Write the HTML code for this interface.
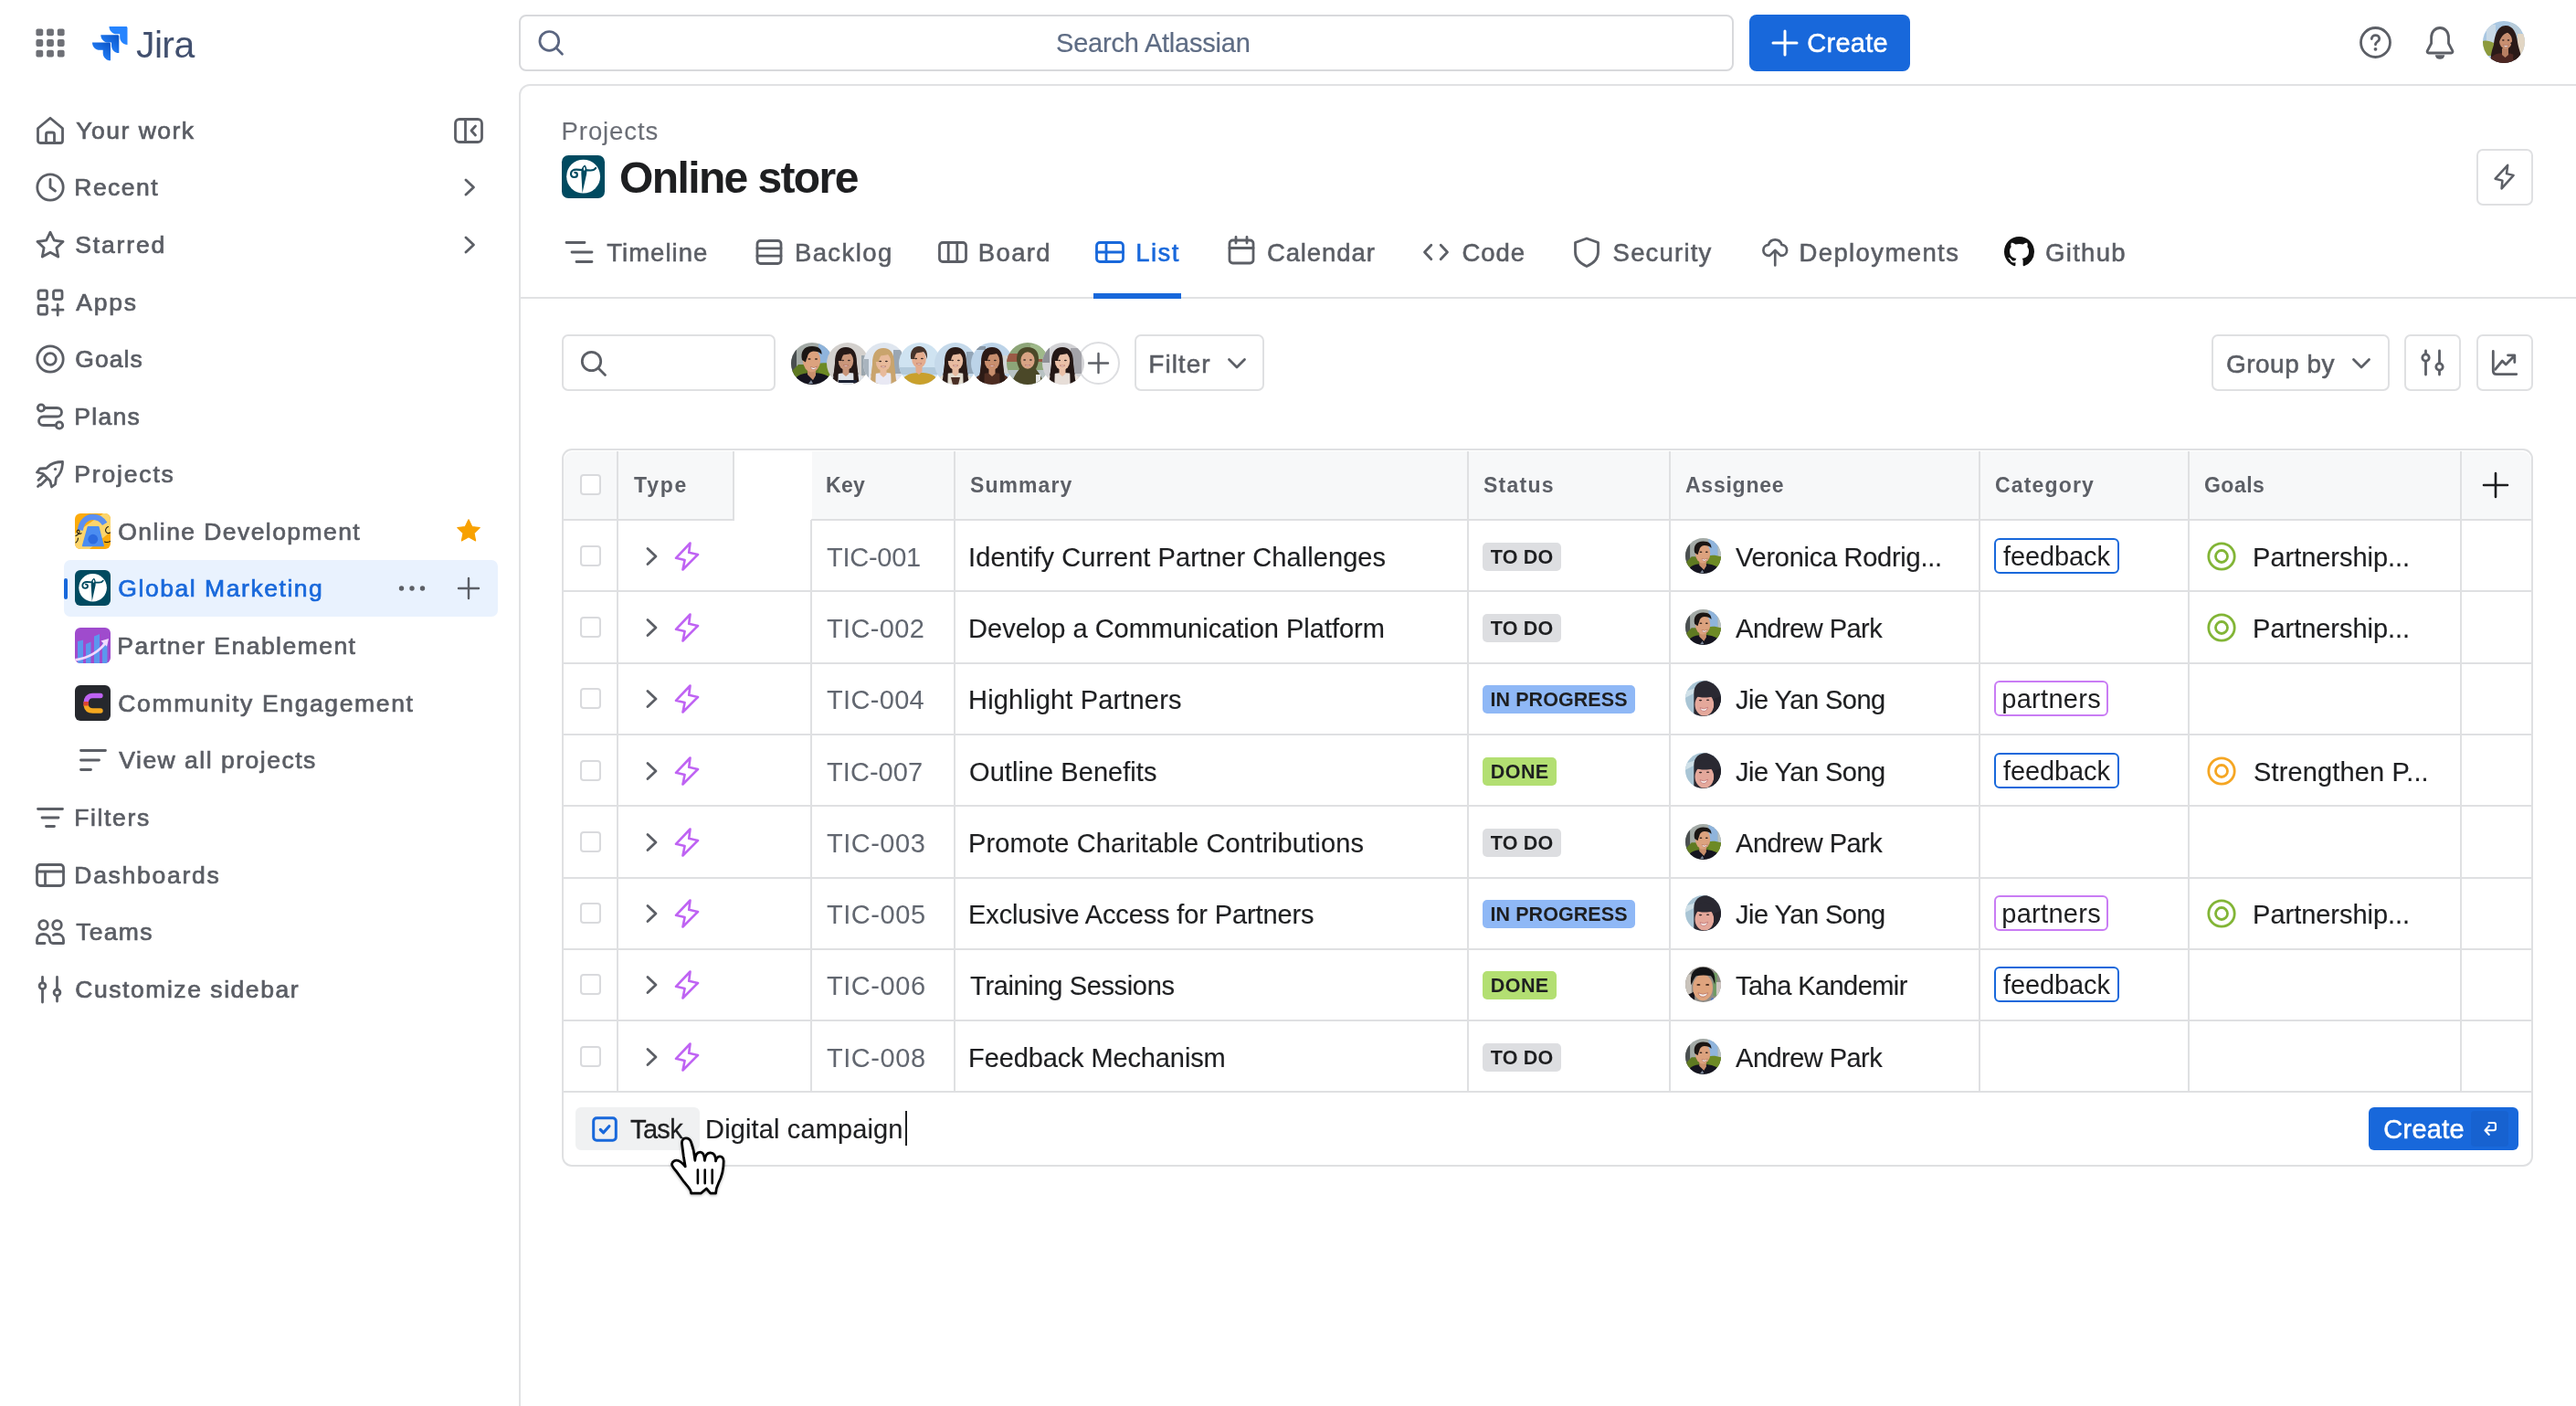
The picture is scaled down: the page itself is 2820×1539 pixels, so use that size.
<!DOCTYPE html>
<html lang="en"><head>
<meta charset="utf-8">
<title>Online store - List - Jira</title>
<style>
*{box-sizing:border-box;margin:0;padding:0}
html,body{width:2820px;height:1539px;overflow:hidden;background:#fff}
body{font-family:"Liberation Sans",sans-serif;color:#5a5d64;position:relative;font-size:29px;letter-spacing:0;-webkit-font-smoothing:antialiased}
.abs{position:absolute}
svg{display:block;overflow:visible}
.ic{position:absolute;fill:none;stroke:#5c5f66;stroke-width:2.8;stroke-linecap:round;stroke-linejoin:round}
.t{position:absolute;white-space:nowrap;line-height:32px;height:32px;-webkit-text-stroke:0.55px currentColor}
/* top bar */
#search{left:568px;top:16px;width:1330px;height:62px;border:2px solid #d8d9dc;border-radius:8px;background:#fff}
#createbtn{left:1915px;top:15.500px;width:176px;height:62.500px;border-radius:8px;background:#1868db}
/* main panel */
#panel{left:568px;top:92px;width:2300px;height:1500px;border:2px solid #e1e2e4;border-radius:12px 0 0 0;background:#fff}
#tabline{left:570px;top:325px;width:2250px;height:2px;background:#e1e2e4}
.nav .t{left:83px;font-size:26.500px;padding-top:0;-webkit-text-stroke:0.7px currentColor}
.sub .t{left:130px;font-size:26.500px;padding-top:0;-webkit-text-stroke:0.7px currentColor}
.btn{position:absolute;border:2px solid #dfe0e2;border-radius:7px;background:#fff}

.hl{height:2px;background:#dfe0e2}
.vl{width:2px;background:#dfe0e2}
.th{font-weight:700;font-size:23px;color:#5c5f66;-webkit-text-stroke:0}
.cb{width:23px;height:23px;border:2.500px solid #d9dadd;border-radius:4px;background:#fff}
.lz{height:31px;border-radius:5px;color:#1e1f21;font-weight:700;font-size:21.500px;line-height:33px;text-align:center;white-space:nowrap}
.tag{height:39px;border:2.500px solid;border-radius:6px;color:#1e1f21;font-size:29px;line-height:36px;text-align:center;white-space:nowrap;background:#fff}
.av40{width:39px;height:39px;border-radius:50%;overflow:hidden}
.av46{width:46px;height:46px;border-radius:50%;overflow:hidden}
.t{padding-top:1px}
</style>
</head>
<body>
<div id="root" style="position:absolute;left:0;top:0;width:2820px;height:1539px;will-change:transform">
<svg width="0" height="0" style="position:absolute"><defs>
<symbol id="av-andrew" viewBox="0 0 46 46"><rect width="46" height="46" fill="#a3aaa6"></rect><rect x="0" y="6" width="6" height="30" fill="#4a4f50"></rect><rect x="30" y="0" width="12" height="26" fill="#8fb4dc"></rect><rect x="42" y="0" width="4" height="26" fill="#b9c2c4"></rect><path d="M8 24h38v14H0v-6z" fill="#5f7a22"></path><path d="M30 23c4-1.500 10-1 16 1v12H30z" fill="#6d8a25"></path><path d="M2 46c1-8 7-13 21-13 11 0 19 3 23 9v4z" fill="#15141f"></path><path d="M18 30h9v6l-3 5-6-6z" fill="#c98f6c"></path><ellipse cx="22.500" cy="19.500" rx="9.600" ry="12.800" fill="#dca27e"></ellipse><path d="M12 19c-2-9 2-15 11-15 8 0 11 4 10.500 9-2-2.500-5-3.500-9-3.500-4 .5-6 3-6.500 6-.8 2-1.500 3.500-2 6z" fill="#1b1614"></path><ellipse cx="20" cy="18" rx="1.700" ry=".8" fill="#2a1c16"></ellipse><ellipse cx="27.500" cy="18" rx="1.700" ry=".8" fill="#2a1c16"></ellipse><path d="M21.500 26.500q3.500 2.500 7-.5-1 3.500-4 3.500t-3-3z" fill="#fff" stroke="#9c5146" stroke-width=".5"></path><path d="M22 41l2 4h-5z" fill="#7c8899"></path></symbol>
<symbol id="av-w2" viewBox="0 0 46 46"><rect width="46" height="46" fill="#d3d0cd"></rect><rect x="38" y="14" width="8" height="22" fill="#9aa5ad"></rect><path d="M9 22c0-12 4.500-17 12-17s12 5 12 17c0 8 2 15 4 22H5c2-7 4-14 4-22z" fill="#251917"></path><path d="M2 46c1-9 8-13 21-13s20 4 21 13z" fill="#e0e4e9"></path><path d="M17.5 26h7v8l-3.500 3-3.500-3z" fill="#c9967a"></path><path d="M9 24c-1 8-2 16-3 24h6.500c0-8 0-15 1-21zM33 24c1 8 2 16 3 24h-6.500c0-8 0-15-1-21z" fill="#251917"></path><ellipse cx="21" cy="20" rx="8.2" ry="10.2" fill="#c9967a"></ellipse><path d="M11.8 20c-1.500-9 3-14 9.2-14s10.7 5 9.2 14c-1-4.500-2.500-7-4-8-3 1-7 1.500-7.199999999999999 1-1.500 1-2.500 3.500-3 7z" fill="#251917"></path><ellipse cx="17.6" cy="19.5" rx="1.5" ry="0.8" fill="#3a2a25"></ellipse><ellipse cx="24.4" cy="19.5" rx="1.5" ry="0.8" fill="#3a2a25"></ellipse><path d="M18.0 25.0q3.0 2.6 6.0 0z" fill="#fff" stroke="#a8584f" stroke-width="0.5"></path><rect x="13" y="41" width="20" height="3" fill="#1d2233"></rect></symbol>
<symbol id="av-w3" viewBox="0 0 46 46"><rect width="46" height="46" fill="#dfe6ef"></rect><rect x="33" y="8" width="9" height="26" fill="#9aa6b2"></rect><rect x="0" y="18" width="6" height="20" fill="#a9b4be"></rect><path d="M10 23c0-12 4.500-17 12-17s12 5 12 17c0 8 2 15 4 22H6c2-7 4-14 4-22z" fill="#c9a46d"></path><path d="M2 46c1-9 8-13 21-13s20 4 21 13z" fill="#e9e9f4"></path><path d="M18.5 27h7v8l-3.500 3-3.500-3z" fill="#e8ba9b"></path><path d="M10 25c-1 8-2 16-3 24h6.500c0-8 0-15 1-21zM34 25c1 8 2 16 3 24h-6.500c0-8 0-15-1-21z" fill="#c9a46d"></path><ellipse cx="22" cy="21" rx="8.2" ry="10.2" fill="#e8ba9b"></ellipse><path d="M12.8 21c-1.500-9 3-14 9.2-14s10.7 5 9.2 14c-1-4.500-2.500-7-4-8-3 1-7 1.500-7.199999999999999 1-1.500 1-2.500 3.500-3 7z" fill="#c9a46d"></path><ellipse cx="18.6" cy="20.5" rx="1.5" ry="0.8" fill="#3a2a25"></ellipse><ellipse cx="25.4" cy="20.5" rx="1.5" ry="0.8" fill="#3a2a25"></ellipse><path d="M19.0 26.0q3.0 2.6 6.0 0z" fill="#fff" stroke="#a8584f" stroke-width="0.5"></path></symbol>
<symbol id="av-m4" viewBox="0 0 46 46"><rect width="46" height="46" fill="#cfe3f1"></rect><rect x="0" y="27" width="46" height="8" fill="#b3cadb"></rect><path d="M2 46c1-9 8-13 21-13s20 4 21 13z" fill="#c9a02c"></path><path d="M18.5 24h7v8l-3.500 3-3.500-3z" fill="#e4ac8e"></path><ellipse cx="22" cy="18" rx="7.8" ry="10" fill="#e4ac8e"></ellipse><path d="M13.2 18c-1.500-9 3-14 8.8-14s10.3 5 8.8 14c-1-4.500-2.500-7-4-8-3 1-7 1.500-6.8 1-1.500 1-2.500 3.500-3 7z" fill="#46332a"></path><ellipse cx="18.6" cy="17.5" rx="1.5" ry="0.8" fill="#3a2a25"></ellipse><ellipse cx="25.4" cy="17.5" rx="1.5" ry="0.8" fill="#3a2a25"></ellipse><path d="M19.0 23.0q3.0 2.6 6.0 0z" fill="#fff" stroke="#a8584f" stroke-width="0.5"></path></symbol>
<symbol id="av-w5" viewBox="0 0 46 46"><rect width="46" height="46" fill="#c5d9ea"></rect><rect x="35" y="10" width="8" height="24" fill="#93a6b8"></rect><path d="M11 22c0-12 4.500-17 12-17s12 5 12 17c0 8 2 15 4 22H7c2-7 4-14 4-22z" fill="#2a1b17"></path><path d="M2 46c1-9 8-13 21-13s20 4 21 13z" fill="#e3ddd1"></path><path d="M19.5 26h7v8l-3.500 3-3.500-3z" fill="#e8bca1"></path><path d="M11 24c-1 8-2 16-3 24h6.500c0-8 0-15 1-21zM35 24c1 8 2 16 3 24h-6.500c0-8 0-15-1-21z" fill="#2a1b17"></path><ellipse cx="23" cy="20" rx="8.2" ry="10.2" fill="#e8bca1"></ellipse><path d="M13.8 20c-1.500-9 3-14 9.2-14s10.7 5 9.2 14c-1-4.500-2.500-7-4-8-3 1-7 1.500-7.199999999999999 1-1.500 1-2.500 3.500-3 7z" fill="#2a1b17"></path><ellipse cx="19.6" cy="19.5" rx="1.5" ry="0.8" fill="#3a2a25"></ellipse><ellipse cx="26.4" cy="19.5" rx="1.5" ry="0.8" fill="#3a2a25"></ellipse><path d="M20.0 25.0q3.0 2.6 6.0 0z" fill="#fff" stroke="#a8584f" stroke-width="0.5"></path><path d="M18 38h10l-2 8h-6z" fill="#4a2f25"></path></symbol>
<symbol id="av-w6" viewBox="0 0 46 46"><rect width="46" height="46" fill="#bcd3e8"></rect><rect x="33" y="14" width="13" height="20" fill="#d2d5d5"></rect><rect x="6" y="4" width="10" height="4" fill="#8a99a8"></rect><path d="M11 22c0-12 4.500-17 12-17s12 5 12 17c0 8 2 15 4 22H7c2-7 4-14 4-22z" fill="#2c1a15"></path><path d="M2 46c1-9 8-13 21-13s20 4 21 13z" fill="#4d2c21"></path><path d="M19.5 26h7v8l-3.500 3-3.500-3z" fill="#c98f6e"></path><path d="M11 24c-1 8-2 16-3 24h6.500c0-8 0-15 1-21zM35 24c1 8 2 16 3 24h-6.500c0-8 0-15-1-21z" fill="#2c1a15"></path><ellipse cx="23" cy="20" rx="8.2" ry="10.2" fill="#c98f6e"></ellipse><path d="M13.8 20c-1.500-9 3-14 9.2-14s10.7 5 9.2 14c-1-4.500-2.500-7-4-8-3 1-7 1.500-7.199999999999999 1-1.500 1-2.500 3.500-3 7z" fill="#2c1a15"></path><ellipse cx="19.6" cy="19.5" rx="1.5" ry="0.8" fill="#3a2a25"></ellipse><ellipse cx="26.4" cy="19.5" rx="1.5" ry="0.8" fill="#3a2a25"></ellipse><path d="M20.0 25.0q3.0 2.6 6.0 0z" fill="#fff" stroke="#a8584f" stroke-width="0.5"></path></symbol>
<symbol id="av-w7" viewBox="0 0 46 46"><rect width="46" height="46" fill="#8da578"></rect><rect x="0" y="12" width="46" height="9" fill="#9a5a45"></rect><rect x="26" y="2" width="20" height="16" fill="#9fb98a"></rect><rect x="0" y="30" width="46" height="16" fill="#b9c3c4"></rect><path d="M6 46c1-9 5-13 8-17-2-4-3-8-3-11 0-8 4-13 12-13s12 5 12 13c0 3-1 7-3 11 3 4 7 8 8 17z" fill="#4b4828"></path><ellipse cx="23" cy="19.500" rx="7.600" ry="9.200" fill="#d8a384"></ellipse><ellipse cx="19.6" cy="19.0" rx="1.5" ry="0.8" fill="#3a2a25"></ellipse><ellipse cx="26.4" cy="19.0" rx="1.5" ry="0.8" fill="#3a2a25"></ellipse><path d="M20.0 24.5q3.0 2.6 6.0 0z" fill="#fff" stroke="#a8584f" stroke-width="0.5"></path><rect x="32" y="35" width="5" height="11" fill="#e6e6e6"></rect></symbol>
<symbol id="av-w8" viewBox="0 0 46 46"><rect width="46" height="46" fill="#d2d2d5"></rect><rect x="31" y="6" width="12" height="28" fill="#a3a3a9"></rect><rect x="0" y="0" width="8" height="22" fill="#8e9096"></rect><path d="M10 22c0-12 4.500-17 12-17s12 5 12 17c0 8 2 15 4 22H6c2-7 4-14 4-22z" fill="#231715"></path><path d="M2 46c1-9 8-13 21-13s20 4 21 13z" fill="#e7ded8"></path><path d="M18.5 26h7v8l-3.500 3-3.500-3z" fill="#eac1a8"></path><path d="M10 24c-1 8-2 16-3 24h6.500c0-8 0-15 1-21zM34 24c1 8 2 16 3 24h-6.500c0-8 0-15-1-21z" fill="#231715"></path><ellipse cx="22" cy="20" rx="8.2" ry="10.2" fill="#eac1a8"></ellipse><path d="M12.8 20c-1.500-9 3-14 9.2-14s10.7 5 9.2 14c-1-4.500-2.500-7-4-8-3 1-7 1.500-7.199999999999999 1-1.500 1-2.500 3.500-3 7z" fill="#231715"></path><ellipse cx="18.6" cy="19.5" rx="1.5" ry="0.8" fill="#3a2a25"></ellipse><ellipse cx="25.4" cy="19.5" rx="1.5" ry="0.8" fill="#3a2a25"></ellipse><path d="M19.0 25.0q3.0 2.6 6.0 0z" fill="#fff" stroke="#a8584f" stroke-width="0.5"></path></symbol>
<symbol id="av-jie" viewBox="0 0 46 46"><rect width="46" height="46" fill="#a9c5d5"></rect><path d="M0 14l12-4v6L0 22z" fill="#cfe0e8"></path><path d="M11 46V16C11 6 18 0 28 0h18v46z" fill="#2a2932"></path><ellipse cx="24.600" cy="31" rx="12.200" ry="14.500" fill="#e4a89b"></ellipse><path d="M12 26c-1-10 4-17 13-17 10 0 15 7 13 19-1-4-2-6-3-7.500-3 .8-6 1.200-10 1.200-5 0-9-1-11-1.500-1 1.500-1.700 3.500-2 5.800z" fill="#2a2932"></path><ellipse cx="19.500" cy="25.500" rx="2" ry=".9" fill="#3a2a2a"></ellipse><ellipse cx="29" cy="25" rx="2" ry=".9" fill="#3a2a2a"></ellipse><path d="M19 35q5 3 10-.5-1.500 5-5.500 5t-4.500-4.500z" fill="#f6e9e6" stroke="#b35d63" stroke-width=".7"></path><path d="M36 24c2 6 1 14-3 20l13 2V20z" fill="#23222a"></path></symbol>
<symbol id="av-taha" viewBox="0 0 46 46"><rect width="46" height="46" fill="#8f8c86"></rect><rect x="0" y="10" width="8" height="30" fill="#c9c3bb"></rect><rect x="36" y="8" width="5" height="30" fill="#6f9a62"></rect><rect x="40" y="20" width="6" height="20" fill="#cfc6c2"></rect><path d="M0 38l12-6v14H0z" fill="#15131a"></path><path d="M34 40l8 3v3H32z" fill="#4f74c8"></path><ellipse cx="22.500" cy="27" rx="12.800" ry="17" fill="#dfa47e"></ellipse><path d="M7.500 24C5 10 11 1 23 1c11 0 17 8 15 22-1.500-4-2.500-8-5-11-6-1-13-1-19 0-3 3-4.500 7-6.500 12z" fill="#141416"></path><ellipse cx="17" cy="23.500" rx="2.400" ry="1" fill="#3b2317"></ellipse><ellipse cx="28.500" cy="23.500" rx="2.400" ry="1" fill="#3b2317"></ellipse><path d="M16.500 34q6 3.500 12.500 0-1.500 5-6.300 5t-6.200-5z" fill="#f4ece8" stroke="#a8584f" stroke-width=".7"></path></symbol>
<symbol id="av-me" viewBox="0 0 46 46"><rect width="46" height="46" fill="#a9c7e2"></rect><rect x="4" y="4" width="10" height="24" fill="#c9d9e6"></rect><rect x="30" y="2" width="12" height="26" fill="#b7cbd9"></rect><rect x="38" y="14" width="8" height="24" fill="#e2d6c4"></rect><path d="M0 22c4-1 8 0 12 2v14H0z" fill="#8c9a3c"></path><path d="M9 46c-1-8 1-14 3-20 1-10 4-21 13-21 8 0 12 8 13 18 1 7 4 12 5 23z" fill="#2a1a18"></path><path d="M6 46c2-8 8-11 18-11s16 4 19 11z" fill="#4d2722"></path><path d="M21 30h7v7l-3.500 3-3.500-3z" fill="#b87f62"></path><ellipse cx="25" cy="21.500" rx="7" ry="9.200" fill="#c98f70"></ellipse><path d="M17.500 24c-1.500-9 1-16 7.500-16 6 0 9.500 5 8.500 14-1.500-5-3.500-8-6-9.500-3.500 1-6 3-7.500 6-1 1.500-1.500 3.500-2.500 5.500z" fill="#2a1a18"></path><ellipse cx="22.300" cy="21" rx="1.300" ry=".7" fill="#2a1a18"></ellipse><ellipse cx="28" cy="21" rx="1.300" ry=".7" fill="#2a1a18"></ellipse><path d="M22.500 26q2.700 2.200 5.500 0-1 2.500-2.800 2.500t-2.700-2.500z" fill="#fff" stroke="#8f4a40" stroke-width=".4"></path><path d="M30 24c3 4 4 10 3 18l6 2c0-10-3-17-5-22z" fill="#2a1a18"></path></symbol>
</defs></svg>

<!-- ============ TOP BAR ============ -->
<div id="topbar">
  <svg class="abs" style="left:39px;top:31px" width="32" height="32" viewBox="0 0 32 32" fill="#6e7076"><rect x="0.4" y="0.4" width="7.800" height="7.800" rx="2"></rect><rect x="12.1" y="0.4" width="7.800" height="7.800" rx="2"></rect><rect x="23.8" y="0.4" width="7.800" height="7.800" rx="2"></rect><rect x="0.4" y="12.1" width="7.800" height="7.800" rx="2"></rect><rect x="12.1" y="12.1" width="7.800" height="7.800" rx="2"></rect><rect x="23.8" y="12.1" width="7.800" height="7.800" rx="2"></rect><rect x="0.4" y="23.8" width="7.800" height="7.800" rx="2"></rect><rect x="12.1" y="23.8" width="7.800" height="7.800" rx="2"></rect><rect x="23.8" y="23.8" width="7.800" height="7.800" rx="2"></rect></svg>
  <!-- jira logo -->
  <svg class="abs" style="left:101px;top:28px" width="39" height="39" viewBox="0 0 39 39">
    <defs>
      <linearGradient id="jg1" x1="1" y1="0" x2="0.3" y2="0.8"><stop offset="0.1" stop-color="#0b56c8"></stop><stop offset="1" stop-color="#2684ff"></stop></linearGradient>
    </defs>
    <path d="M38 1H19.5c0 4.6 3.7 8.3 8.3 8.3h3.4v3.3c0 4.6 3.7 8.3 8.3 8.3V2.5C39.5 1.7 38.8 1 38 1z" fill="#2684ff" transform="translate(-1,0)"></path>
    <path d="M28.8 10.2H10.3c0 4.6 3.7 8.3 8.3 8.3H22v3.3c0 4.6 3.7 8.3 8.3 8.3V11.7c0-.8-.7-1.5-1.5-1.5z" fill="url(#jg1)" transform="translate(-1,0)"></path>
    <path d="M19.5 19.4H1c0 4.6 3.7 8.3 8.3 8.3h3.4V31c0 4.6 3.7 8.3 8.3 8.3V20.9c0-.8-.7-1.5-1.5-1.5z" fill="url(#jg1)" transform="translate(-1,-1)"></path>
  </svg>
  <div class="t" style="left: 149px; top: 24px; font-size: 41px; line-height: 48px; height: 48px; color: rgb(66, 80, 111); letter-spacing: -0.62px; -webkit-text-stroke: 0px;">Jira</div>

  <div id="search" class="abs"></div>
  <svg class="ic" style="left:587px;top:32px;stroke:#5a6580;stroke-width:2.700" width="30" height="30" viewBox="0 0 30 30"><circle cx="14.300" cy="12.900" r="10.400"></circle><path d="M21.800 20.400l6.700 6.800"></path></svg>
  <div class="t" style="left: 1156.1px; top: 30px; color: rgb(94, 108, 132); -webkit-text-stroke: 0.2px; letter-spacing: -0.22px;">Search Atlassian</div>

  <div id="createbtn" class="abs"></div>
  <svg class="ic" style="left:1940px;top:33px;stroke:#fff;stroke-width:3" width="28" height="28" viewBox="0 0 28 28"><path d="M14 1v26M1 14h26"></path></svg>
  <div class="t" style="left: 1978.3px; top: 30px; color: rgb(255, 255, 255); -webkit-text-stroke: 0.5px; letter-spacing: 0.26px;">Create</div>

  <!-- help -->
  <svg class="ic" style="left:2583px;top:29px" width="35" height="35" viewBox="0 0 35 35"><circle cx="17.5" cy="17.5" r="16"></circle><path d="M13.3 13.6c0-2.4 1.9-4 4.2-4s4.2 1.5 4.2 3.8c0 3-4.2 3.2-4.2 6.4" stroke-width="2.8"></path><circle cx="17.5" cy="24.8" r="1.9" fill="#5c5f66" stroke="none"></circle></svg>
  <!-- bell -->
  <svg class="ic" style="left:2655px;top:29px" width="32" height="36" viewBox="0 0 32 36"><path d="M6.600 12c0-6 4-10.500 9.500-10.500s9.400 4.500 9.400 10.500v6.500l4.300 8.200c.6 1.200-.1 2.300-1.400 2.300H3.700c-1.300 0-2-1.100-1.400-2.300l4.300-8.200z"></path><path d="M10.800 31.200a5.300 5.300 0 0 0 10.500 0z" fill="#5c5f66" stroke="none"></path></svg>
  <!-- avatar -->
  <div class="abs av46" style="left:2718px;top:23px"><svg width="46" height="46"><use href="#av-me"></use></svg></div>
</div>

<!-- ============ MAIN PANEL FRAME ============ -->
<div id="panel" class="abs"></div>
<div id="tabline" class="abs"></div>

<!-- SIDEBAR -->
<div id="sidebar" class="nav">
  <!-- Your work -->
  <svg class="ic" style="left:39px;top:127px" width="32" height="32" viewBox="0 0 32 32"><path d="M2.5 13.5L16 2.2l13.500 11.300V27c0 1.400-1.100 2.500-2.500 2.500H5c-1.400 0-2.500-1.100-2.500-2.500z"></path><path d="M11.500 29.500v-9.500c0-1.100.9-2 2-2h5c1.100 0 2 .9 2 2v9.500"></path></svg>
  <div class="t" style="top: 127px; left: 83.3px; letter-spacing: 1.49px;">Your work</div>
  <svg class="ic" style="left:497px;top:129px" width="32" height="28" viewBox="0 0 32 28"><rect x="1.500" y="1.500" width="29" height="25" rx="4.500"></rect><path d="M12.500 1.500v25M23.500 9l-4.500 5 4.500 5"></path></svg>
  <!-- Recent -->
  <svg class="ic" style="left:39px;top:189px" width="32" height="32" viewBox="0 0 32 32"><circle cx="16" cy="16" r="14.200"></circle><path d="M16 7.500V16l5.500 4"></path></svg>
  <div class="t" style="top: 189px; left: 81.3px; letter-spacing: 1.46px;">Recent</div>
  <svg class="ic" style="left:508px;top:195px" width="12" height="20" viewBox="0 0 12 20"><path d="M2 2l8.500 8L2 18"></path></svg>
  <!-- Starred -->
  <svg class="ic" style="left:39px;top:252px" width="32" height="32" viewBox="0 0 32 32"><path d="M16 2.200l4.300 9 9.700 1.300-7.100 6.800 1.800 9.700L16 24.300 7.300 29l1.800-9.700L2 12.500l9.700-1.300z"></path></svg>
  <div class="t" style="top: 252px; left: 82.3px; letter-spacing: 1.84px;">Starred</div>
  <svg class="ic" style="left:508px;top:258px" width="12" height="20" viewBox="0 0 12 20"><path d="M2 2l8.500 8L2 18"></path></svg>
  <!-- Apps -->
  <svg class="ic" style="left:39px;top:315px" width="32" height="32" viewBox="0 0 32 32"><rect x="3" y="3" width="9.500" height="9.500" rx="2"></rect><rect x="19.500" y="3" width="9.500" height="9.500" rx="2"></rect><rect x="3" y="19.500" width="9.500" height="9.500" rx="2"></rect><path d="M24.200 18.500v11.500M18.500 24.200h11.500"></path></svg>
  <div class="t" style="top: 315px; left: 83.3px; letter-spacing: 1.78px;">Apps</div>
  <!-- Goals -->
  <svg class="ic" style="left:39px;top:377px" width="32" height="32" viewBox="0 0 32 32"><circle cx="16" cy="16" r="14.200"></circle><circle cx="16" cy="16" r="6.300"></circle></svg>
  <div class="t" style="top: 377px; left: 82.3px; letter-spacing: 1.03px;">Goals</div>
  <!-- Plans -->
  <svg class="ic" style="left:39px;top:440px" width="32" height="32" viewBox="0 0 32 32"><circle cx="6" cy="6.500" r="3.700"></circle><circle cx="26" cy="25.500" r="3.700"></circle><path d="M9.800 6.500h13.700c3.200 0 5 2.100 5 4.700s-1.800 4.800-5 4.800H8.500c-3.200 0-5 2.100-5 4.700s1.800 4.800 5 4.800h13.700"></path></svg>
  <div class="t" style="top: 440px; left: 81.3px; letter-spacing: 1.29px;">Plans</div>
  <!-- Projects -->
  <svg class="ic" style="left:39px;top:503px" width="32" height="32" viewBox="0 0 32 32"><path d="M12 9.500C16 4.500 22 2.500 29.500 2.500c0 7.500-2 13.500-7 17.500l-1 7-4 3-1.500-6.500-8-8L1.500 14l3-4z"></path><circle cx="21.500" cy="10.500" r="1.600" fill="#5c5f66" stroke="none"></circle><path d="M3 22.500l5-5M5.500 28l7-7M2.500 29.500l2-2"></path></svg>
  <div class="t" style="top: 503px; left: 81.3px; letter-spacing: 1.83px;">Projects</div>

  <!-- sub projects -->
  <div class="abs" style="left:70px;top:613px;width:475px;height:62px;background:#e9f2fe;border-radius:7px"></div>
  <div class="abs" style="left:70px;top:633px;width:4px;height:23px;background:#1868db;border-radius:2px"></div>

  <svg class="abs" style="left:82px;top:562px" width="39" height="39" viewBox="0 0 39 39"><defs><clipPath id="cp1"><rect width="39" height="39" rx="6"></rect></clipPath></defs><g clip-path="url(#cp1)"><rect width="39" height="39" fill="#fcab0c"></rect><path d="M31 0h8v20L16 39H0V22z" fill="#fdd56c"></path><path d="M5.800 18.500C7 8.500 13.500 3.800 19.500 3.800c5.500 0 10.500 3 13.200 7.600" fill="none" stroke="#5b8ff0" stroke-width="6.200" stroke-linecap="butt"></path><path d="M14.400 14.800h11.400L31.200 35.500H8.600z" fill="#4b8df1" stroke="#4b8df1" stroke-width="1.500" stroke-linejoin="round"></path><circle cx="19.800" cy="28.200" r="5.400" fill="#2c6be0"></circle><path d="M1 24.500c2.500-1 4.500-3.500 3.800-5.500-.6-1.600-2.800-.800-2.500 1.200.3 2.200 2.800 2.800 4.700 1.500M36.500 14.500c-2.500 1-3.500 3.500-2.500 5.500s3 2 4.500 1M32.500 31c2 .800 4.500.600 6.500-.500M1 32c1.500-1 2.500-3 2.500-5" fill="none" stroke="#1d1a12" stroke-width="1.100" stroke-linecap="round"></path></g></svg>
  <svg class="abs" style="left:82px;top:624px" width="39" height="39" viewBox="0 0 39 39"><rect width="39" height="39" rx="6" fill="#004a60"></rect><circle cx="19.600" cy="19.200" r="15.300" fill="#fff"></circle><path d="M30.800 11.600c-1 1.700-2.700 2.100-4.600 2.100-4.500 0-9-.7-13-.7-2.900 0-4.900 1.500-4.900 3.800 0 1.900 1.400 3.100 3.100 3.100 1.500 0 2.600-1 2.600-2.300 0-1.200-.9-2-2.100-2" fill="none" stroke="#004a60" stroke-width="1.800" stroke-linecap="round"></path><path d="M20.900 8.800c1.600 1.300 2.100 3.700 1.700 7.700L18.700 34.200l-1-17.700c-.2-4 1-6.500 3.200-7.700z" fill="#004a60"></path><ellipse cx="20.500" cy="12.200" rx=".7" ry="1.600" fill="#fff"></ellipse></svg>
  <svg class="abs" style="left:82px;top:687px" width="39" height="39" viewBox="0 0 39 39"><defs><clipPath id="cp3"><rect width="39" height="39" rx="6"></rect></clipPath></defs><g clip-path="url(#cp3)"><rect width="39" height="39" fill="#9f4bcd"></rect><path d="M3 15l6-1.500V39H3zM12 18l5.500-2.500V39H12zM21 9.500l6-2.500V39h-6zM30 17l5.500-3V39H30z" fill="#5b97ee"></path><path d="M0 35.500C13 33.500 26 27 34 16" fill="none" stroke="#f1d9ff" stroke-width="2.800" stroke-linecap="round"></path><path d="M28.500 14.500l8.500-2.500-2 8.800z" fill="#f1d9ff"></path></g></svg>
  <svg class="abs" style="left:82px;top:750px" width="39" height="39" viewBox="0 0 39 39"><rect width="39" height="39" rx="6" fill="#26282d"></rect><path d="M28 11.500H19.500c-4.500 0-7.300 3-7.300 7.500" fill="none" stroke="#bf63f3" stroke-width="5.400" stroke-linecap="round"></path><path d="M12.200 22c.6 3.800 3.300 6 7.300 6H28" fill="none" stroke="#f5a81f" stroke-width="5.400" stroke-linecap="round"></path><path d="M12.200 18v4.500" fill="none" stroke="#dd4430" stroke-width="5.400"></path><path d="M14 11a8 8 0 0 1 5.500-2.200H28" fill="none" stroke="#bf63f3" stroke-width="0"></path></svg>

  <div class="sub">
  <div class="t" style="top: 566px; left: 129.3px; letter-spacing: 1.43px;">Online Development</div>
  <div class="t" style="top: 628px; color: rgb(24, 104, 219); left: 129.3px; letter-spacing: 1.55px;">Global Marketing</div>
  <div class="t" style="top: 691px; left: 128.3px; letter-spacing: 1.47px;">Partner Enablement</div>
  <div class="t" style="top: 754px; left: 129.3px; letter-spacing: 1.63px;">Community Engagement</div>
  <div class="t" style="top: 816px; left: 130.3px; letter-spacing: 1.5px;">View all projects</div>
  </div>
  <svg class="abs" style="left:500px;top:568px" width="26" height="25" viewBox="0 0 26 25"><path d="M13 .8l3.700 7.700 8.500 1.100-6.200 5.900 1.600 8.400L13 19.800 5.400 23.900 7 15.500.8 9.600l8.500-1.100z" fill="#f8a100" stroke="#f8a100" stroke-width="1.200" stroke-linejoin="round"></path></svg>
  <svg class="abs" style="left:436px;top:640px" width="30" height="8" viewBox="0 0 30 8" fill="#5c5f66"><circle cx="3.500" cy="4" r="2.700"></circle><circle cx="15" cy="4" r="2.700"></circle><circle cx="26.500" cy="4" r="2.700"></circle></svg>
  <svg class="ic" style="left:501px;top:632px;stroke-width:2.400" width="24" height="24" viewBox="0 0 24 24"><path d="M12 1v22M1 12h22"></path></svg>
  <svg class="ic" style="left:87px;top:818px" width="30" height="28" viewBox="0 0 30 28"><path d="M1.500 3.500h27M1.500 14h20M1.500 24.500h11"></path></svg>

  <!-- Filters -->
  <svg class="ic" style="left:39px;top:879px" width="32" height="32" viewBox="0 0 32 32"><path d="M2.500 6.500h27M7 16h18M11.500 25.500h9"></path></svg>
  <div class="t" style="top: 879px; left: 81.3px; letter-spacing: 1.62px;">Filters</div>
  <!-- Dashboards -->
  <svg class="ic" style="left:39px;top:942px" width="32" height="32" viewBox="0 0 32 32"><rect x="1.500" y="4.500" width="29" height="23" rx="3.500"></rect><path d="M10.500 12v15.500M1.500 12h29"></path></svg>
  <div class="t" style="top: 942px; left: 81.3px; letter-spacing: 1.72px;">Dashboards</div>
  <!-- Teams -->
  <svg class="ic" style="left:39px;top:1004px" width="32" height="32" viewBox="0 0 32 32"><circle cx="8.500" cy="8.500" r="4.800"></circle><circle cx="23.500" cy="8.500" r="4.800"></circle><path d="M1.500 28.500v-3.500c0-3.800 3-6.500 7-6.500s7 2.700 7 6.500c0 2 1.500 3.500 3.500 3.500h11.500v-3.500c0-3.800-3-6.500-7-6.500-1.600 0-3 .4-4.100 1.100M1.500 28.500H10"></path></svg>
  <div class="t" style="top: 1004px; left: 83.3px; letter-spacing: 1.27px;">Teams</div>
  <!-- Customize -->
  <svg class="ic" style="left:39px;top:1067px" width="32" height="32" viewBox="0 0 32 32"><path d="M7.500 2.500v6.300M7.500 15.600V30M23.500 2.500v13.500M23.500 22.800V29"></path><circle cx="7.500" cy="12.200" r="3.400"></circle><circle cx="23.500" cy="19.400" r="3.400"></circle></svg>
  <div class="t" style="top: 1067px; left: 82.3px; letter-spacing: 1.55px;">Customize sidebar</div>
</div>

<!-- MAIN -->
<div id="main">
  <div class="t" style="left: 614.6px; top: 127px; font-size: 27.5px; color: rgb(107, 110, 118); -webkit-text-stroke: 0.1px; letter-spacing: 0.9px;">Projects</div>
  <svg class="abs" style="left:615px;top:170px" width="47" height="47" viewBox="0 0 39 39"><rect width="39" height="39" rx="6" fill="#004a60"></rect><circle cx="19.600" cy="19.200" r="15.300" fill="#fff"></circle><path d="M30.800 11.600c-1 1.700-2.700 2.100-4.600 2.100-4.500 0-9-.7-13-.7-2.900 0-4.900 1.500-4.900 3.800 0 1.900 1.400 3.100 3.100 3.100 1.500 0 2.600-1 2.600-2.300 0-1.200-.9-2-2.100-2" fill="none" stroke="#004a60" stroke-width="1.800" stroke-linecap="round"></path><path d="M20.900 8.800c1.600 1.300 2.100 3.700 1.700 7.700L18.700 34.200l-1-17.700c-.2-4 1-6.500 3.200-7.700z" fill="#004a60"></path><ellipse cx="20.500" cy="12.200" rx=".7" ry="1.600" fill="#fff"></ellipse></svg>
  <div class="t" style="left: 678px; top: 166px; font-size: 48px; line-height: 56px; height: 56px; font-weight: 700; color: rgb(30, 31, 33); -webkit-text-stroke: 0px; letter-spacing: -1.61px;">Online store</div>

  <!-- automation button -->
  <div class="btn" style="left:2711px;top:163px;width:62px;height:62px"></div>
  <svg class="ic" style="left:2727px;top:178px;stroke-width:2.500" width="30" height="32" viewBox="0 0 30 32"><path d="M18.200 2.800L4.600 17.700l7.800 1.900-.8 8.800L24.600 13.900 17 12.100z"></path></svg>

  <!-- tabs -->
  <svg class="ic" style="left:618px;top:260px" width="32" height="32" viewBox="0 0 32 32"><path d="M2 5.500h20M8 16h22M13 26.500h17"></path></svg>
  <div class="t" style="left: 664.3px; top: 260px; font-size: 27.5px; letter-spacing: 1.01px;">Timeline</div>
  <svg class="ic" style="left:827px;top:260px" width="30" height="32" viewBox="0 0 30 32"><rect x="2" y="3.500" width="26" height="25" rx="3.500"></rect><path d="M2 11.800h26M2 20.200h26"></path></svg>
  <div class="t" style="left: 869.9px; top: 260px; font-size: 27.5px; letter-spacing: 1.42px;">Backlog</div>
  <svg class="ic" style="left:1027px;top:260px" width="32" height="32" viewBox="0 0 32 32"><rect x="1.500" y="5.500" width="29" height="21" rx="3.500"></rect><path d="M11.200 5.500v21M20.800 5.500v21"></path></svg>
  <div class="t" style="left: 1070.8px; top: 260px; font-size: 27.5px; letter-spacing: 1.37px;">Board</div>
  <svg class="ic" style="left:1199px;top:260px;stroke:#1868db" width="32" height="32" viewBox="0 0 32 32"><rect x="1.500" y="5.500" width="29" height="21" rx="3.500"></rect><path d="M1.500 16h29M12 5.500v21"></path></svg>
  <div class="t" style="left: 1243.3px; top: 260px; font-size: 27.5px; color: rgb(24, 104, 219); letter-spacing: 1.43px;">List</div>
  <div class="abs" style="left:1197px;top:320.500px;width:95.500px;height:6.500px;background:#1868db"></div>
  <svg class="ic" style="left:1344px;top:258px" width="30" height="32" viewBox="0 0 30 32"><rect x="2" y="5" width="26" height="25" rx="3.500"></rect><path d="M2 13.500h26M9 1.500v6.500M21 1.500v6.500"></path></svg>
  <div class="t" style="left: 1386.9px; top: 260px; font-size: 27.5px; letter-spacing: 0.9px;">Calendar</div>
  <svg class="ic" style="left:1557px;top:264px" width="30" height="24" viewBox="0 0 30 24"><path d="M9.800 4.200l-7.300 7.800 7.300 7.800M20.200 4.200l7.300 7.800-7.300 7.800"></path></svg>
  <div class="t" style="left: 1600.6px; top: 260px; font-size: 27.5px; letter-spacing: 0.9px;">Code</div>
  <svg class="ic" style="left:1722px;top:259px" width="30" height="34" viewBox="0 0 30 34"><path d="M15 2L2.500 6.500V17c0 7.500 5.500 12.500 12.500 15.500 7-3 12.500-8 12.500-15.500V6.500z"></path></svg>
  <div class="t" style="left: 1765.6px; top: 260px; font-size: 27.5px; letter-spacing: 1.19px;">Security</div>
  <svg class="ic" style="left:1928.500px;top:260.500px;stroke-width:2.900" width="28.500" height="31.300" viewBox="0 0 31 34"><path d="M8.500 20.500C4.500 20.500 1.500 17.800 1.500 14c0-3.500 2.700-6.300 6.200-6.500C8.700 4 11.800 1.500 15.500 1.500s6.800 2.500 7.800 6c3.500.2 6.200 3 6.200 6.500 0 3.800-3 6.500-7 6.500"></path><path d="M15.500 32V14.500M9.500 20l6-6 6 6"></path></svg>
  <div class="t" style="left: 1969.5px; top: 260px; font-size: 27.5px; letter-spacing: 1.39px;">Deployments</div>
  <svg class="abs" style="left:2194px;top:259px" width="33" height="33" viewBox="0 0 16 16" fill="#111"><path d="M8 0C3.580 0 0 3.580 0 8c0 3.540 2.290 6.530 5.470 7.590.4.070.55-.17.550-.38 0-.19-.01-.82-.01-1.490-2.010.37-2.530-.49-2.690-.94-.09-.23-.48-.94-.82-1.130-.28-.15-.68-.52-.01-.53.63-.01 1.080.58 1.230.82.720 1.210 1.870.87 2.330.66.070-.52.280-.87.510-1.070-1.780-.2-3.640-.89-3.640-3.950 0-.87.310-1.590.82-2.150-.08-.2-.36-1.020.08-2.120 0 0 .67-.21 2.200.82.640-.18 1.320-.27 2-.27s1.360.09 2 .27c1.530-1.040 2.200-.82 2.200-.82.440 1.100.16 1.920.08 2.120.51.560.82 1.270.82 2.150 0 3.070-1.870 3.750-3.650 3.950.29.250.54.730.54 1.480 0 1.070-.01 1.930-.01 2.200 0 .21.150.46.550.38A8.013 8.013 0 0 0 16 8c0-4.420-3.580-8-8-8z"></path></svg>
  <div class="t" style="left: 2239.1px; top: 260px; font-size: 27.5px; letter-spacing: 1.28px;">Github</div>

  <!-- toolbar -->
  <div class="btn" style="left:615px;top:366px;width:234px;height:62px"></div>
  <svg class="ic" style="left:635px;top:383px" width="30" height="30" viewBox="0 0 30 30"><circle cx="12.500" cy="12.500" r="10.200"></circle><path d="M20 20l7.500 7.500"></path></svg>
  <div id="avatars">
<div class="abs av46" style="left:866.0px;top:374.5px;z-index:1"><svg width="46" height="46"><use href="#av-andrew"></use></svg></div>
<div class="abs av46" style="left:905.3px;top:374.5px;z-index:2"><svg width="46" height="46"><use href="#av-w2"></use></svg></div>
<div class="abs av46" style="left:944.6px;top:374.5px;z-index:3"><svg width="46" height="46"><use href="#av-w3"></use></svg></div>
<div class="abs av46" style="left:983.9px;top:374.5px;z-index:4"><svg width="46" height="46"><use href="#av-m4"></use></svg></div>
<div class="abs av46" style="left:1023.2px;top:374.5px;z-index:5"><svg width="46" height="46"><use href="#av-w5"></use></svg></div>
<div class="abs av46" style="left:1062.5px;top:374.5px;z-index:6"><svg width="46" height="46"><use href="#av-w6"></use></svg></div>
<div class="abs av46" style="left:1101.8px;top:374.5px;z-index:7"><svg width="46" height="46"><use href="#av-w7"></use></svg></div>
<div class="abs av46" style="left:1141.1px;top:374.5px;z-index:8"><svg width="46" height="46"><use href="#av-w8"></use></svg></div>
</div>
  <div class="abs" style="left:1179px;top:374px;width:47px;height:47px;border-radius:50%;border:2px solid #dddee1;background:#fff"></div>
  <svg class="ic" style="left:1191px;top:386px;stroke-width:2.400" width="23" height="23" viewBox="0 0 23 23"><path d="M11.500 1v21M1 11.500h21"></path></svg>
  <div class="btn" style="left:1242px;top:366px;width:142px;height:62px"></div>
  <div class="t" style="left: 1257.3px; top: 382px; font-size: 28px; letter-spacing: 1.01px;">Filter</div>
  <svg class="ic" style="left:1344px;top:392px" width="20" height="12" viewBox="0 0 20 12"><path d="M1.500 1.500L10 10l8.500-8.500"></path></svg>

  <div class="btn" style="left:2421px;top:366px;width:195px;height:62px"></div>
  <div class="t" style="left: 2436.9px; top: 382px; font-size: 28px; letter-spacing: 0.5px;">Group by</div>
  <svg class="ic" style="left:2575px;top:392px" width="20" height="12" viewBox="0 0 20 12"><path d="M1.500 1.500L10 10l8.500-8.500"></path></svg>
  <div class="btn" style="left:2632px;top:366px;width:62px;height:62px"></div>
  <svg class="ic" style="left:2650px;top:383px" width="26" height="28" viewBox="0 0 26 28"><path d="M5.500 1v3.500M5.500 12.500V27M20.500 1v13.500M20.500 22.500V27"></path><circle cx="5.500" cy="8.500" r="3.700"></circle><circle cx="20.500" cy="18.500" r="3.700"></circle></svg>
  <div class="btn" style="left:2711px;top:366px;width:62px;height:62px"></div>
  <svg class="ic" style="left:2728px;top:384px" width="28" height="27" viewBox="0 0 28 27"><path d="M1.300 .5v21.500c0 2.300 1.300 3.600 3.600 3.600h21.900"></path><path d="M3.600 20.300l7.700-9.300 3.900 3.900 9.300-9.300M17.500 4.800h7.300v7.800"></path></svg>
</div>

<!-- TABLE -->
<div id="tbl">
<div class="abs" style="left:615px;top:491px;width:2158px;height:786px;border:2px solid #dfe0e2;border-radius:11px;background:#fff"></div>
<div class="abs" style="left:617px;top:494px;width:186px;height:75px;background:#f7f8f9;border-radius:11px 0 0 0"></div>
<div class="abs" style="left:889px;top:494px;width:1882px;height:75px;background:#f7f8f9;border-radius:0 11px 0 0"></div>
<div class="abs hl" style="left:617px;top:568px;width:187px"></div>
<div class="abs hl" style="left:888px;top:568px;width:1883px"></div>
<div class="abs hl" style="left:617px;top:646px;width:2154px"></div>
<div class="abs hl" style="left:617px;top:725px;width:2154px"></div>
<div class="abs hl" style="left:617px;top:803px;width:2154px"></div>
<div class="abs hl" style="left:617px;top:881px;width:2154px"></div>
<div class="abs hl" style="left:617px;top:960px;width:2154px"></div>
<div class="abs hl" style="left:617px;top:1038px;width:2154px"></div>
<div class="abs hl" style="left:617px;top:1116px;width:2154px"></div>
<div class="abs hl" style="left:617px;top:1194px;width:2154px"></div>
<div class="abs vl" style="left:675px;top:494px;height:702px"></div>
<div class="abs vl" style="left:802px;top:494px;height:76px"></div>
<div class="abs vl" style="left:887px;top:569px;height:627px"></div>
<div class="abs vl" style="left:1044px;top:494px;height:702px"></div>
<div class="abs vl" style="left:1606px;top:494px;height:702px"></div>
<div class="abs vl" style="left:1827px;top:494px;height:702px"></div>
<div class="abs vl" style="left:2166px;top:494px;height:702px"></div>
<div class="abs vl" style="left:2395px;top:494px;height:702px"></div>
<div class="abs vl" style="left:2693px;top:494px;height:702px"></div>
<div class="t th" style="left: 694px; top: 514px; letter-spacing: 1.81px;">Type</div>
<div class="t th" style="left: 904px; top: 514px; letter-spacing: 0.3px;">Key</div>
<div class="t th" style="left: 1062px; top: 514px; letter-spacing: 1.08px;">Summary</div>
<div class="t th" style="left: 1624px; top: 514px; letter-spacing: 1.24px;">Status</div>
<div class="t th" style="left: 1845px; top: 514px; letter-spacing: 0.75px;">Assignee</div>
<div class="t th" style="left: 2184px; top: 514px; letter-spacing: 1.16px;">Category</div>
<div class="t th" style="left: 2413px; top: 514px; letter-spacing: 0.47px;">Goals</div>
<div class="abs cb" style="left:635px;top:519px"></div>
<svg class="ic" style="left:2718px;top:517px;stroke:#1e1f21;stroke-width:2.600" width="28" height="28" viewBox="0 0 28 28"><path d="M14 1v26M1 14h26"></path></svg>
<!-- row 1 -->
<div class="abs cb" style="left:635px;top:597px"></div>
<svg class="ic" style="left:707px;top:599px;stroke-width:2.800" width="13" height="20" viewBox="0 0 13 20"><path d="M2 1.500l9 8.500-9 8.500"></path></svg>
<svg class="ic" style="left:738px;top:593px;stroke:#bf63f3;stroke-width:2.600" width="28" height="32" viewBox="0 0 28 32"><path d="M17.500 1.500L2 17.800l9.600 2.200L9.500 30.500 26 14l-9.800-2.200z"></path></svg>
<div class="t" style="left: 905px; top: 593px; color: rgb(98, 103, 112); -webkit-text-stroke: 0px; letter-spacing: -0.27px;">TIC-001</div>
<div class="t" style="left: 1060.1px; top: 593px; color: rgb(30, 31, 33); -webkit-text-stroke: 0.15px; letter-spacing: 0.07px;">Identify Current Partner Challenges</div>
<div class="abs lz" style="left: 1623px; top: 593.5px; width: 86px; background: rgb(221, 222, 225); letter-spacing: 0.23px; text-indent: 0.23px;">TO DO</div>
<div class="abs av40" style="left:1845px;top:589px"><svg width="39" height="39" viewBox="0 0 39 39"><use href="#av-andrew"></use></svg></div>
<div class="t" style="left: 1900.1px; top: 593px; color: rgb(30, 31, 33); -webkit-text-stroke: 0.15px; letter-spacing: -0.27px;">Veronica Rodrig...</div>
<div class="abs tag" style="left: 2183px; top: 589px; width: 137px; border-color: rgb(24, 104, 219); letter-spacing: -0.13px; text-indent: -0.13px;">feedback</div>
<svg class="ic" style="left:2416px;top:593px;stroke:#82b536;stroke-width:2.800" width="32" height="32" viewBox="0 0 32 32"><circle cx="16" cy="16" r="14.200"></circle><circle cx="16" cy="16" r="6.500"></circle></svg>
<div class="t" style="left: 2466.1px; top: 593px; color: rgb(30, 31, 33); -webkit-text-stroke: 0.15px; letter-spacing: -0.03px;">Partnership...</div>
<!-- row 2 -->
<div class="abs cb" style="left:635px;top:675px"></div>
<svg class="ic" style="left:707px;top:677px;stroke-width:2.800" width="13" height="20" viewBox="0 0 13 20"><path d="M2 1.500l9 8.500-9 8.500"></path></svg>
<svg class="ic" style="left:738px;top:671px;stroke:#bf63f3;stroke-width:2.600" width="28" height="32" viewBox="0 0 28 32"><path d="M17.500 1.500L2 17.800l9.600 2.200L9.500 30.500 26 14l-9.800-2.200z"></path></svg>
<div class="t" style="left: 905px; top: 671px; color: rgb(98, 103, 112); -webkit-text-stroke: 0px; letter-spacing: 0.35px;">TIC-002</div>
<div class="t" style="left: 1060.1px; top: 671px; color: rgb(30, 31, 33); -webkit-text-stroke: 0.15px; letter-spacing: -0.01px;">Develop a Communication Platform</div>
<div class="abs lz" style="left: 1623px; top: 671.5px; width: 86px; background: rgb(221, 222, 225); letter-spacing: 0.23px; text-indent: 0.23px;">TO DO</div>
<div class="abs av40" style="left:1845px;top:667px"><svg width="39" height="39" viewBox="0 0 39 39"><use href="#av-andrew"></use></svg></div>
<div class="t" style="left: 1900.1px; top: 671px; color: rgb(30, 31, 33); -webkit-text-stroke: 0.15px; letter-spacing: -0.54px;">Andrew Park</div>
<svg class="ic" style="left:2416px;top:671px;stroke:#82b536;stroke-width:2.800" width="32" height="32" viewBox="0 0 32 32"><circle cx="16" cy="16" r="14.200"></circle><circle cx="16" cy="16" r="6.500"></circle></svg>
<div class="t" style="left: 2466.1px; top: 671px; color: rgb(30, 31, 33); -webkit-text-stroke: 0.15px; letter-spacing: -0.03px;">Partnership...</div>
<!-- row 3 -->
<div class="abs cb" style="left:635px;top:753px"></div>
<svg class="ic" style="left:707px;top:755px;stroke-width:2.800" width="13" height="20" viewBox="0 0 13 20"><path d="M2 1.500l9 8.500-9 8.500"></path></svg>
<svg class="ic" style="left:738px;top:749px;stroke:#bf63f3;stroke-width:2.600" width="28" height="32" viewBox="0 0 28 32"><path d="M17.500 1.500L2 17.800l9.600 2.200L9.500 30.500 26 14l-9.800-2.200z"></path></svg>
<div class="t" style="left: 905px; top: 749px; color: rgb(98, 103, 112); -webkit-text-stroke: 0px; letter-spacing: 0.33px;">TIC-004</div>
<div class="t" style="left: 1060.1px; top: 749px; color: rgb(30, 31, 33); -webkit-text-stroke: 0.15px; letter-spacing: 0.17px;">Highlight Partners</div>
<div class="abs lz" style="left: 1623px; top: 749.5px; width: 167px; background: rgb(143, 184, 246); letter-spacing: 0.07px; text-indent: 0.07px;">IN PROGRESS</div>
<div class="abs av40" style="left:1845px;top:745px"><svg width="39" height="39" viewBox="0 0 39 39"><use href="#av-jie"></use></svg></div>
<div class="t" style="left: 1900.1px; top: 749px; color: rgb(30, 31, 33); -webkit-text-stroke: 0.15px; letter-spacing: -0.52px;">Jie Yan Song</div>
<div class="abs tag" style="left: 2183px; top: 745px; width: 125px; border-color: rgb(201, 124, 244); letter-spacing: 0.29px; text-indent: 0.29px;">partners</div>
<!-- row 4 -->
<div class="abs cb" style="left:635px;top:832px"></div>
<svg class="ic" style="left:707px;top:834px;stroke-width:2.800" width="13" height="20" viewBox="0 0 13 20"><path d="M2 1.500l9 8.500-9 8.500"></path></svg>
<svg class="ic" style="left:738px;top:828px;stroke:#bf63f3;stroke-width:2.600" width="28" height="32" viewBox="0 0 28 32"><path d="M17.500 1.500L2 17.800l9.600 2.200L9.500 30.500 26 14l-9.800-2.200z"></path></svg>
<div class="t" style="left: 905px; top: 828px; color: rgb(98, 103, 112); -webkit-text-stroke: 0px; letter-spacing: 0.06px;">TIC-007</div>
<div class="t" style="left: 1061.1px; top: 828px; color: rgb(30, 31, 33); -webkit-text-stroke: 0.15px; letter-spacing: 0.04px;">Outline Benefits</div>
<div class="abs lz" style="left: 1623px; top: 828.5px; width: 81px; background: rgb(179, 223, 114); letter-spacing: 0.44px; text-indent: 0.44px;">DONE</div>
<div class="abs av40" style="left:1845px;top:824px"><svg width="39" height="39" viewBox="0 0 39 39"><use href="#av-jie"></use></svg></div>
<div class="t" style="left: 1900.1px; top: 828px; color: rgb(30, 31, 33); -webkit-text-stroke: 0.15px; letter-spacing: -0.52px;">Jie Yan Song</div>
<div class="abs tag" style="left: 2183px; top: 824px; width: 137px; border-color: rgb(24, 104, 219); letter-spacing: -0.13px; text-indent: -0.13px;">feedback</div>
<svg class="ic" style="left:2416px;top:828px;stroke:#f5a623;stroke-width:2.800" width="32" height="32" viewBox="0 0 32 32"><circle cx="16" cy="16" r="14.200"></circle><circle cx="16" cy="16" r="6.500"></circle></svg>
<div class="t" style="left: 2467.1px; top: 828px; color: rgb(30, 31, 33); -webkit-text-stroke: 0.15px; letter-spacing: 0.13px;">Strengthen P...</div>
<!-- row 5 -->
<div class="abs cb" style="left:635px;top:910px"></div>
<svg class="ic" style="left:707px;top:912px;stroke-width:2.800" width="13" height="20" viewBox="0 0 13 20"><path d="M2 1.500l9 8.500-9 8.500"></path></svg>
<svg class="ic" style="left:738px;top:906px;stroke:#bf63f3;stroke-width:2.600" width="28" height="32" viewBox="0 0 28 32"><path d="M17.500 1.500L2 17.800l9.600 2.200L9.500 30.500 26 14l-9.800-2.200z"></path></svg>
<div class="t" style="left: 905px; top: 906px; color: rgb(98, 103, 112); -webkit-text-stroke: 0px; letter-spacing: 0.5px;">TIC-003</div>
<div class="t" style="left: 1060.1px; top: 906px; color: rgb(30, 31, 33); -webkit-text-stroke: 0.15px; letter-spacing: 0.13px;">Promote Charitable Contributions</div>
<div class="abs lz" style="left: 1623px; top: 906.5px; width: 86px; background: rgb(221, 222, 225); letter-spacing: 0.23px; text-indent: 0.23px;">TO DO</div>
<div class="abs av40" style="left:1845px;top:902px"><svg width="39" height="39" viewBox="0 0 39 39"><use href="#av-andrew"></use></svg></div>
<div class="t" style="left: 1900.1px; top: 906px; color: rgb(30, 31, 33); -webkit-text-stroke: 0.15px; letter-spacing: -0.54px;">Andrew Park</div>
<!-- row 6 -->
<div class="abs cb" style="left:635px;top:988px"></div>
<svg class="ic" style="left:707px;top:990px;stroke-width:2.800" width="13" height="20" viewBox="0 0 13 20"><path d="M2 1.500l9 8.500-9 8.500"></path></svg>
<svg class="ic" style="left:738px;top:984px;stroke:#bf63f3;stroke-width:2.600" width="28" height="32" viewBox="0 0 28 32"><path d="M17.500 1.500L2 17.800l9.600 2.200L9.500 30.500 26 14l-9.800-2.200z"></path></svg>
<div class="t" style="left: 905px; top: 984px; color: rgb(98, 103, 112); -webkit-text-stroke: 0px; letter-spacing: 0.55px;">TIC-005</div>
<div class="t" style="left: 1060.1px; top: 984px; color: rgb(30, 31, 33); -webkit-text-stroke: 0.15px; letter-spacing: -0.13px;">Exclusive Access for Partners</div>
<div class="abs lz" style="left: 1623px; top: 984.5px; width: 167px; background: rgb(143, 184, 246); letter-spacing: 0.07px; text-indent: 0.07px;">IN PROGRESS</div>
<div class="abs av40" style="left:1845px;top:980px"><svg width="39" height="39" viewBox="0 0 39 39"><use href="#av-jie"></use></svg></div>
<div class="t" style="left: 1900.1px; top: 984px; color: rgb(30, 31, 33); -webkit-text-stroke: 0.15px; letter-spacing: -0.52px;">Jie Yan Song</div>
<div class="abs tag" style="left: 2183px; top: 980px; width: 125px; border-color: rgb(201, 124, 244); letter-spacing: 0.29px; text-indent: 0.29px;">partners</div>
<svg class="ic" style="left:2416px;top:984px;stroke:#82b536;stroke-width:2.800" width="32" height="32" viewBox="0 0 32 32"><circle cx="16" cy="16" r="14.200"></circle><circle cx="16" cy="16" r="6.500"></circle></svg>
<div class="t" style="left: 2466.1px; top: 984px; color: rgb(30, 31, 33); -webkit-text-stroke: 0.15px; letter-spacing: -0.03px;">Partnership...</div>
<!-- row 7 -->
<div class="abs cb" style="left:635px;top:1066px"></div>
<svg class="ic" style="left:707px;top:1068px;stroke-width:2.800" width="13" height="20" viewBox="0 0 13 20"><path d="M2 1.500l9 8.500-9 8.500"></path></svg>
<svg class="ic" style="left:738px;top:1062px;stroke:#bf63f3;stroke-width:2.600" width="28" height="32" viewBox="0 0 28 32"><path d="M17.500 1.500L2 17.800l9.600 2.200L9.500 30.500 26 14l-9.800-2.200z"></path></svg>
<div class="t" style="left: 905px; top: 1062px; color: rgb(98, 103, 112); -webkit-text-stroke: 0px; letter-spacing: 0.55px;">TIC-006</div>
<div class="t" style="left: 1062.1px; top: 1062px; color: rgb(30, 31, 33); -webkit-text-stroke: 0.15px; letter-spacing: -0.35px;">Training Sessions</div>
<div class="abs lz" style="left: 1623px; top: 1062.5px; width: 81px; background: rgb(179, 223, 114); letter-spacing: 0.44px; text-indent: 0.44px;">DONE</div>
<div class="abs av40" style="left:1845px;top:1058px"><svg width="39" height="39" viewBox="0 0 39 39"><use href="#av-taha"></use></svg></div>
<div class="t" style="left: 1900.1px; top: 1062px; color: rgb(30, 31, 33); -webkit-text-stroke: 0.15px; letter-spacing: -0.57px;">Taha Kandemir</div>
<div class="abs tag" style="left: 2183px; top: 1058px; width: 137px; border-color: rgb(24, 104, 219); letter-spacing: -0.13px; text-indent: -0.13px;">feedback</div>
<!-- row 8 -->
<div class="abs cb" style="left:635px;top:1145px"></div>
<svg class="ic" style="left:707px;top:1147px;stroke-width:2.800" width="13" height="20" viewBox="0 0 13 20"><path d="M2 1.500l9 8.500-9 8.500"></path></svg>
<svg class="ic" style="left:738px;top:1141px;stroke:#bf63f3;stroke-width:2.600" width="28" height="32" viewBox="0 0 28 32"><path d="M17.500 1.500L2 17.800l9.600 2.200L9.500 30.500 26 14l-9.800-2.200z"></path></svg>
<div class="t" style="left: 905px; top: 1141px; color: rgb(98, 103, 112); -webkit-text-stroke: 0px; letter-spacing: 0.55px;">TIC-008</div>
<div class="t" style="left: 1060.1px; top: 1141px; color: rgb(30, 31, 33); -webkit-text-stroke: 0.15px; letter-spacing: -0.12px;">Feedback Mechanism</div>
<div class="abs lz" style="left: 1623px; top: 1141.5px; width: 86px; background: rgb(221, 222, 225); letter-spacing: 0.23px; text-indent: 0.23px;">TO DO</div>
<div class="abs av40" style="left:1845px;top:1137px"><svg width="39" height="39" viewBox="0 0 39 39"><use href="#av-andrew"></use></svg></div>
<div class="t" style="left: 1900.1px; top: 1141px; color: rgb(30, 31, 33); -webkit-text-stroke: 0.15px; letter-spacing: -0.54px;">Andrew Park</div>
<!-- footer create row -->
<div class="abs" style="left:630px;top:1212px;width:136px;height:47px;background:#f0f1f2;border-radius:6px"></div>
<svg class="ic" style="left:648px;top:1222px;stroke:#1868db;stroke-width:3" width="28" height="28" viewBox="0 0 28 28"><rect x="1.700" y="1.700" width="24.600" height="24.600" rx="3.500"></rect><path d="M9.300 14.500l3.300 3.300 6.300-7" stroke-width="3.200"></path></svg>
<div class="t" style="left: 690.1px; top: 1219px; color: rgb(30, 31, 33); -webkit-text-stroke: 0.3px; letter-spacing: -0.68px;">Task</div>
<div class="t" style="left: 772.1px; top: 1219px; color: rgb(30, 31, 33); -webkit-text-stroke: 0.15px; letter-spacing: 0.13px;">Digital campaign</div>
<div class="abs" style="left:991px;top:1216px;width:2px;height:38px;background:#1e1f21"></div>
<div class="abs" style="left:2593px;top:1212px;width:164px;height:47px;background:#1868db;border-radius:6px"></div>
<div class="abs" style="left:2705px;top:1216px;width:41px;height:39px;background:#1558bc;border-radius:4px;opacity:.32"></div>
<div class="t" style="left: 2609.3px; top: 1219px; color: rgb(255, 255, 255); -webkit-text-stroke: 0.5px; letter-spacing: 0.26px;">Create</div>
<svg class="ic" style="left:2719px;top:1227px;stroke:#fff;stroke-width:2.100" width="15" height="17" viewBox="0 0 15 17"><path d="M5.500 2h5.500c1.300 0 2 .7 2 2v4.200c0 1.300-.7 2-2 2H2M5.800 5.500L1.500 10.200l4.300 4.800"></path></svg>
<svg class="abs" style="left:732.8px;top:1244.1px;filter:drop-shadow(0 1.500px 1.500px rgba(0,0,0,.3))" width="62.700" height="64.700" viewBox="200 220 980 1010"><path d="M480 250C430 250 405 290 412 345L440 560L470 735C440 700 400 655 350 635C300 615 250 640 240 690C235 730 280 770 330 835L450 1000C500 1060 550 1110 560 1150L570 1190L740 1190L830 1110L900 1190L990 1190C995 1130 1000 1090 1040 1010C1090 910 1125 800 1125 640C1125 590 1095 560 1060 562C1025 565 1000 590 990 640C990 560 970 500 900 498C840 496 810 540 800 630C795 540 775 488 725 488C670 488 640 530 635 630C625 500 600 400 565 310C550 270 520 250 480 250Z" fill="#fff" stroke="#000" stroke-width="43" stroke-linejoin="round"></path><path d="M683 790V1020M805 790V1020M930 790V1020" fill="none" stroke="#000" stroke-width="40" stroke-linecap="round"></path></svg>
</div>

</div>


</body></html>
